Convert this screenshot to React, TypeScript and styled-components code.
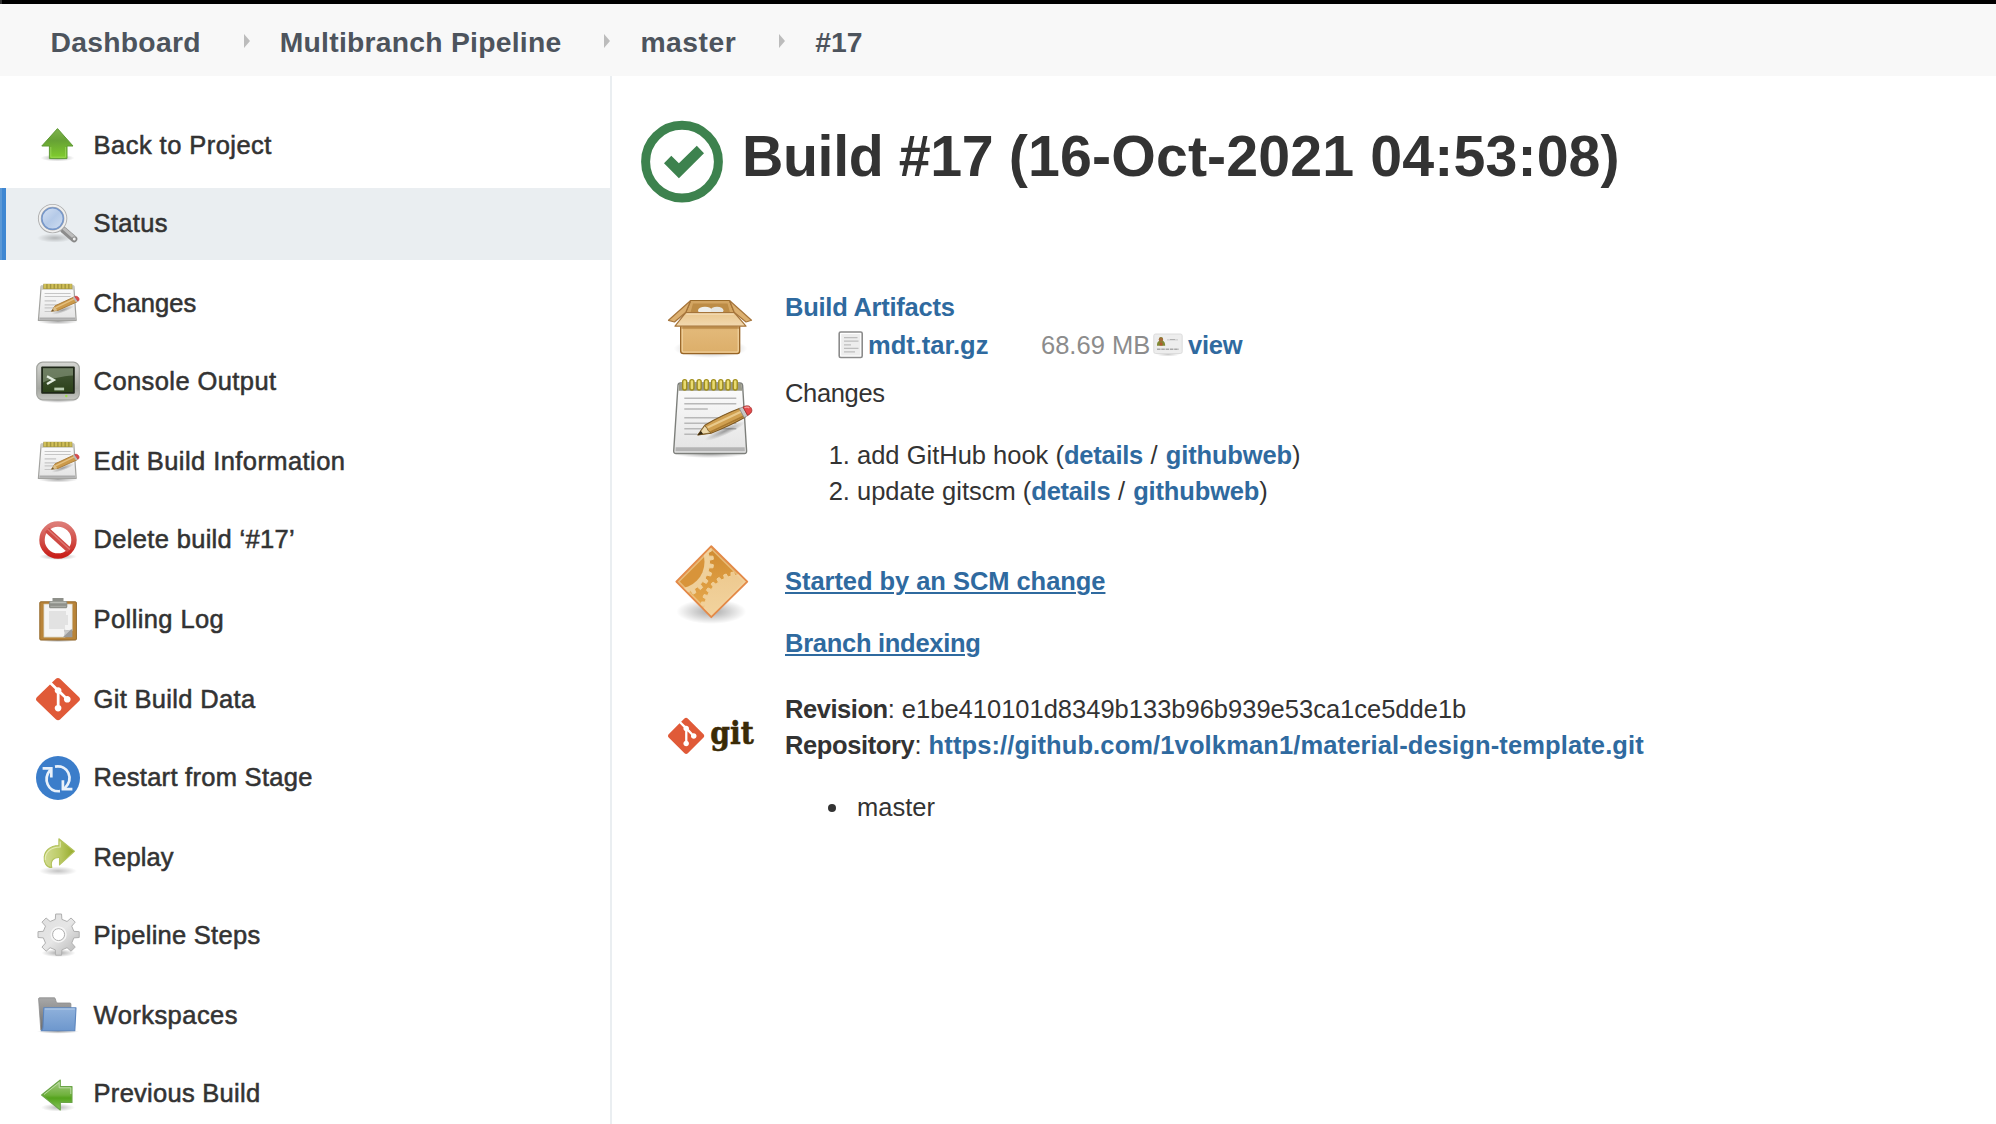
import React from "react";
import styled, { createGlobalStyle } from "styled-components";

const GlobalStyle = createGlobalStyle`
  * { box-sizing: border-box; }
  html, body { margin: 0; padding: 0; background: #fff; }
  body {
    font-family: "Liberation Sans", Arial, Helvetica, sans-serif;
    font-size: 25.5px;
    line-height: 36px;
    color: #333;
    overflow: hidden;
  }
  svg { display: block; flex: none; overflow: visible; }
`;

const Page = styled.div`
  display: flex;
  flex-direction: column;
  height: 1124px;
  overflow: hidden;
`;

const TopStrip = styled.div`
  flex: none;
  height: 4px;
  background: #000;
  border-left: 2px solid #333;
`;

const Breadcrumbs = styled.nav`
  flex: none;
  display: flex;
  align-items: center;
  height: 72px;
  padding: 3px 0 0 50.5px;
  background: #f8f8f8;
`;

const Crumb = styled.a<{ $track: number }>`
  font-size: 28.3px;
  font-weight: 700;
  color: #4d545d;
  white-space: nowrap;
  letter-spacing: ${(p) => p.$track}px;
`;

const Chevron = styled.span`
  width: 0;
  height: 0;
  margin: -1px 30px 0 43px;
  border: solid transparent;
  border-width: 7px 0 7px 6px;
  border-left-color: #bcbcbc;
`;

const Columns = styled.div`
  flex: 1;
  display: flex;
  min-height: 0;
`;

const Sidebar = styled.aside`
  flex: none;
  width: 612px;
  padding-top: 34px;
  border-right: 2px solid #eaeef1;
`;

const Task = styled.a<{ $active?: boolean; $track: number }>`
  display: flex;
  align-items: center;
  gap: 13.6px;
  height: 72px;
  margin-right: -2px;
  margin-bottom: 6px;
  padding-left: 36px;
  background: ${(p) => (p.$active ? "#eaeef1" : "transparent")};
  box-shadow: ${(p) => (p.$active ? "inset 2px 0 #5b98d6, inset 6px 0 #3f87d2" : "none")};
  letter-spacing: ${(p) => p.$track}px;

  &:nth-child(even) { margin-bottom: 8px; }
  &:nth-child(n + 7):nth-child(odd) { margin-bottom: 8px; }
  &:nth-child(n + 7):nth-child(even) { margin-bottom: 6px; }
`;

const TaskLabel = styled.span`
  padding-bottom: 2px;
  white-space: nowrap;
  -webkit-text-stroke: 0.55px #333;
`;

const Main = styled.main`
  flex: 1;
  padding: 45px 0 0 29px;
`;

const Heading = styled.header`
  display: flex;
  gap: 19px;
  height: 168px;
`;

const Title = styled.h1`
  margin: 5px 0 0;
  font-size: 57.3px;
  line-height: 60px;
  font-weight: 700;
  letter-spacing: 0.12px;
  white-space: nowrap;
`;

const BuildName = styled.span`
  letter-spacing: -0.38px;
`;

const Section = styled.section<{ $height: number }>`
  display: grid;
  grid-template-columns: 88px 1fr;
  column-gap: 30px;
  align-items: start;
  height: ${(p) => p.$height}px;
  padding-left: 26px;
`;

const IconCell = styled.div<{ $top: number }>`
  margin-top: ${(p) => p.$top}px;
`;

const Line = styled.div<{ $track?: number }>`
  white-space: nowrap;
  letter-spacing: ${(p) => p.$track ?? 0}px;
`;

const Label = styled.b<{ $track: number }>`
  letter-spacing: ${(p) => p.$track}px;
`;

const FileRow = styled.div`
  display: flex;
  align-items: center;
  margin-top: 2px;
  padding-left: 53px;
`;

const FileName = styled.a`
  margin-left: 4px;
  width: 173px;
  font-weight: 700;
  color: #2f6a9f;
`;

const FileSize = styled.span`
  width: 112px;
  color: #8c8c8c;
`;

const Link = styled.a<{ $underline?: boolean; $track?: number }>`
  font-weight: 700;
  color: #2f6a9f;
  letter-spacing: ${(p) => p.$track ?? 0}px;
  text-decoration: ${(p) => (p.$underline ? "underline" : "none")};
  text-decoration-thickness: 2px;
  text-underline-offset: 2px;
`;

const ViewLink = styled(Link)`
  margin-left: 5px;
`;

const Divider = styled.span`
  letter-spacing: 0.5px;
`;

const Paragraph = styled.p`
  margin: 0 0 26px;
  white-space: nowrap;
`;

const Ordered = styled.ol`
  margin: 26px 0 0;
  padding-left: 72px;
`;

const Item = styled.li`
  white-space: nowrap;
`;

const Bullets = styled.ul`
  margin: 26px 0 0;
  padding-left: 43px;
  list-style: none;
`;

const BulletItem = styled.li`
  display: flex;
  align-items: center;
  gap: 21px;

  &::before {
    content: "";
    width: 8px;
    height: 8px;
    margin-top: 2px;
    border-radius: 50%;
    background: #333;
  }
`;

const Small = ({ children }: { children: React.ReactNode }) => (
  <svg width="44" height="44" viewBox="0 0 44 44">{children}</svg>
);

const Gradients = () => (
  <svg width="0" height="0" style={{ position: "absolute" }}>
    <defs>
      <linearGradient id="green" x1="0" y1="0" x2="0" y2="1">
        <stop offset="0" stopColor="#7fb34d" />
        <stop offset=".4" stopColor="#67a235" />
        <stop offset="1" stopColor="#82cf2c" />
      </linearGradient>
      <linearGradient id="greenLeft" x1="0" y1="0" x2="0" y2="1">
        <stop offset="0" stopColor="#a9cc88" />
        <stop offset=".5" stopColor="#6fb13c" />
        <stop offset=".6" stopColor="#55a31d" />
        <stop offset="1" stopColor="#86c75c" />
      </linearGradient>
      <linearGradient id="olive" x1="0" y1="0" x2="1" y2="0">
        <stop offset="0" stopColor="#d3dc93" />
        <stop offset=".5" stopColor="#bccb66" />
        <stop offset="1" stopColor="#94a928" />
      </linearGradient>
      <radialGradient id="shadow">
        <stop offset="0" stopColor="#000" stopOpacity=".34" />
        <stop offset=".5" stopColor="#000" stopOpacity=".17" />
        <stop offset="1" stopColor="#000" stopOpacity="0" />
      </radialGradient>
      <linearGradient id="lens" x1="0" y1="0" x2="1" y2="1">
        <stop offset="0" stopColor="#dbe6f5" />
        <stop offset=".5" stopColor="#b5cae8" />
        <stop offset="1" stopColor="#d5e2f3" />
      </linearGradient>
      <linearGradient id="paper" x1="0" y1="0" x2="0" y2="1">
        <stop offset="0" stopColor="#fdfdfd" />
        <stop offset="1" stopColor="#e3e3e3" />
      </linearGradient>
      <linearGradient id="screen" x1="0" y1="0" x2="0" y2="1">
        <stop offset="0" stopColor="#46583a" />
        <stop offset="1" stopColor="#2b4119" />
      </linearGradient>
      <linearGradient id="bezel" x1="0" y1="0" x2="0" y2="1">
        <stop offset="0" stopColor="#d5d6d2" />
        <stop offset=".7" stopColor="#a5a7a1" />
        <stop offset="1" stopColor="#c4c6c1" />
      </linearGradient>
      <linearGradient id="red" x1="0" y1="0" x2="0" y2="1">
        <stop offset="0" stopColor="#dd7b76" />
        <stop offset=".6" stopColor="#cf4740" />
        <stop offset="1" stopColor="#c91f1a" />
      </linearGradient>
      <linearGradient id="steel" x1="0" y1="0" x2="1" y2="1">
        <stop offset="0" stopColor="#dedede" />
        <stop offset=".5" stopColor="#e6e6e6" />
        <stop offset="1" stopColor="#b4b4b4" />
      </linearGradient>
      <linearGradient id="folder" x1="0" y1="0" x2="0" y2="1">
        <stop offset="0" stopColor="#8fb1db" />
        <stop offset="1" stopColor="#6d97cd" />
      </linearGradient>
      <linearGradient id="folderBack" x1="0" y1="0" x2="0" y2="1">
        <stop offset="0" stopColor="#a8a8a8" />
        <stop offset="1" stopColor="#6c6c6c" />
      </linearGradient>
      <linearGradient id="carton" x1="0" y1="0" x2="0" y2="1">
        <stop offset="0" stopColor="#d3a45c" />
        <stop offset=".25" stopColor="#e2b878" />
        <stop offset="1" stopColor="#dcae69" />
      </linearGradient>
      <linearGradient id="flap" x1="0" y1="0" x2="0" y2="1">
        <stop offset="0" stopColor="#e9c68e" />
        <stop offset="1" stopColor="#f2d9b0" />
      </linearGradient>
      <linearGradient id="gearLight" x1="0" y1="0" x2="0" y2="1">
        <stop offset="0" stopColor="#edc98f" />
        <stop offset="1" stopColor="#f6dba9" />
      </linearGradient>
      <linearGradient id="gearDark" x1="0" y1="0" x2="0" y2="1">
        <stop offset="0" stopColor="#cf8a30" />
        <stop offset="1" stopColor="#e9ac4f" />
      </linearGradient>
    </defs>
  </svg>
);

const UpIcon = () => (
  <Small>
    <ellipse cx="21.5" cy="34" rx="17" ry="3.5" fill="url(#shadow)" />
    <path d="M21.5 4.6 37 22H31v12.6H13.4V22H5.8z" fill="url(#green)" stroke="#5e9a35" strokeWidth="1" strokeLinejoin="round" />
    <path d="M14.8 23v10.2h14.8V23" fill="none" stroke="#a4dd62" strokeWidth="1" opacity=".7" />
  </Small>
);

const SearchIcon = () => (
  <Small>
    <ellipse cx="19" cy="36" rx="18" ry="4.6" fill="url(#shadow)" opacity=".7" />
    <path d="M27.5 28 38 37" stroke="#8c8c8c" strokeWidth="6.6" strokeLinecap="round" />
    <path d="M28.4 27.2 38.6 36" stroke="#bdbdbd" strokeWidth="3" strokeLinecap="round" />
    <circle cx="38.2" cy="37" r="2" fill="#eee" stroke="#777" strokeWidth=".8" />
    <circle cx="16.6" cy="16.6" r="12.8" fill="url(#lens)" stroke="#adadad" strokeWidth="3.8" />
    <circle cx="16.6" cy="16.6" r="12.8" fill="none" stroke="#efefef" strokeWidth="2" />
    <circle cx="16.6" cy="16.6" r="10.7" fill="none" stroke="#7596ca" strokeWidth="1.4" />
  </Small>
);

const NotepadIcon = () => (
  <Small>
    <ellipse cx="22" cy="39.5" rx="20" ry="3" fill="url(#shadow)" />
    <path d="M5.2 4h32.6l2.4 34.4H2.4z" fill="url(#paper)" stroke="#a3a3a0" strokeWidth="1.2" strokeLinejoin="round" />
    <path d="M5 4h33l.3 3.8H4.7z" fill="#c9c8bc" />
    <path d="M3.4 36.6h36" stroke="#adadad" strokeWidth="2.4" />
    <path d="M7.3 4.4h29" stroke="#a39640" strokeWidth="5.2" />
    <path d="M8 4.2h28.4" stroke="#cfbe57" strokeWidth="4.6" strokeDasharray="2.2 1.45" />
    <path d="M8.6 11.5h26M8.6 14.5h26M8.6 18.8h11.5M8.6 22.8h22M8.6 25.8h18M8.6 29.5h10" stroke="#c6c6c6" strokeWidth="1.2" />
    <ellipse cx="27" cy="28" rx="12" ry="2.4" fill="url(#shadow)" transform="rotate(-20 27 28)" />
    <path d="M15.5 29.2l3.6-5.4L38 15l3.2 4.8L22 28.4z" fill="#cc9a4a" stroke="#a87a38" strokeWidth=".9" strokeLinejoin="round" />
    <path d="M19.5 25.8 38.6 16.7" stroke="#e5c07f" strokeWidth="1.4" />
    <path d="M15.5 29.2l3.2-4.8 2.6 4.2z" fill="#dcc08a" />
    <path d="M15.3 29.4l1.7-2.200.9 1.500z" fill="#5f4a2a" />
    <path d="M36.8 15.5l2.4-1.1 3.2 4.8-2.6 1.1z" fill="#b9b9b9" />
    <path d="M38.8 14.6c3-1.4 5.8 2.8 3.2 4.6z" fill="#e0484a" stroke="#c04040" strokeWidth=".8" />
  </Small>
);

const TerminalIcon = () => (
  <Small>
    <ellipse cx="22" cy="40" rx="20" ry="3" fill="url(#shadow)" />
    <rect x=".7" y="2.2" width="42.6" height="37.6" rx="6" fill="url(#bezel)" stroke="#a2a49f" strokeWidth="1.2" />
    <rect x="5.2" y="6.4" width="33.6" height="27.4" rx="1" fill="#1f2819" />
    <rect x="7" y="8.2" width="30" height="23.8" fill="url(#screen)" />
    <path d="M7 8.2h30v7.3C26 16.4 16 18 7 22.5z" fill="#8b9a7f" opacity=".6" />
    <path d="M11 16.2l6.8 3.8-6.8 4" fill="none" stroke="#e3ede0" strokeWidth="2.4" />
    <path d="M18.3 29h9.8" stroke="#b8cbb0" strokeWidth="2.8" />
    <circle cx="30.3" cy="36" r="1.2" fill="#9be04a" />
  </Small>
);

const DeleteIcon = () => (
  <Small>
    <ellipse cx="22" cy="38.6" rx="19" ry="3.4" fill="url(#shadow)" />
    <circle cx="22" cy="22" r="16" fill="#fff" fillOpacity=".8" stroke="url(#red)" strokeWidth="5.4" />
    <path d="M11 11.8 33.2 32.2" stroke="#cf4a44" strokeWidth="5.8" />
    <path d="M11.5 11 33.8 31.4" stroke="#dd7772" strokeWidth="1.4" />
  </Small>
);

const ClipboardIcon = () => (
  <Small>
    <ellipse cx="22" cy="42.4" rx="18" ry="1.8" fill="url(#shadow)" />
    <rect x="3.8" y="3.8" width="36.6" height="38.2" rx="1" fill="#b98439" stroke="#94682a" strokeWidth="1" />
    <path d="M7.8 6h28.6v26.5l-7.4 6.7H7.8z" fill="#f4f4f4" stroke="#c9b994" strokeWidth=".6" />
    <path d="M13 13h17v4h2v10h-3v4H13z" fill="#e2e2e2" />
    <path d="M36.4 31v8.2H27c2-1.5 2.4-4 1.2-7.4 3 .8 6 .6 8.2-.8z" fill="#9b9b9b" />
    <path d="M27 39.2c2-1.5 2.4-4 1.2-7.4 2 .5 4.5.6 6.5 0z" fill="#c9c9c9" />
    <path d="M16.5 0h11v3H30c1 0 1.300 1 1.300 2v3.400c0 1-.6 1.900-1.600 1.900H14.500c-1 0-1.500-.9-1.500-1.900V5c0-1 .3-2 1.300-2h2.200z" fill="#8e908a" />
    <path d="M14.2 4.5h16" stroke="#b9bbb5" strokeWidth="1.6" />
    <path d="M14.4 8.400h15.600" stroke="#a7a9a3" strokeWidth="1.2" />
  </Small>
);

const GIT_MARK =
  "M23.546 10.93L13.067.452c-.604-.603-1.582-.603-2.188 0L8.708 2.627l2.76 2.76c.645-.215 1.379-.07 1.889.441.516.515.658 1.258.438 1.9l2.658 2.66c.645-.223 1.387-.078 1.9.435.721.72.721 1.884 0 2.604-.719.719-1.881.719-2.6 0-.539-.541-.674-1.337-.404-1.996L12.86 8.955v6.525c.176.086.342.203.488.348.713.721.713 1.883 0 2.6-.719.721-1.889.721-2.609 0-.719-.719-.719-1.879 0-2.598.182-.18.387-.316.605-.406V8.835c-.217-.091-.424-.222-.6-.401-.545-.545-.676-1.342-.396-2.009L7.636 3.7.45 10.881c-.6.605-.6 1.584 0 2.189l10.48 10.477c.604.604 1.582.604 2.186 0l10.43-10.43c.605-.603.605-1.582 0-2.187";

const GitIcon = () => (
  <Small>
    <path transform="scale(1.8333 1.76)" d={GIT_MARK} fill="#e05a38" />
  </Small>
);

const RestartIcon = () => (
  <Small>
    <circle cx="22" cy="22" r="22" fill="#3b7dca" />
    <g fill="none" stroke="#e9f1fa" strokeWidth="2.7">
      <path d="M24 35.2C12 36 6.5 23.5 14.2 13.8" />
      <path d="M19 10.6C32 8.5 38.5 22.5 28.6 32.4" />
      <path d="M6.6 12.4h8.7V21.5" />
      <path d="M36.4 33.2h-9.5V24.3" />
    </g>
  </Small>
);

const ReplayIcon = () => (
  <Small>
    <ellipse cx="22" cy="35" rx="19" ry="4.6" fill="url(#shadow)" opacity=".7" />
    <path d="M22.9 2.8 38.4 15.3 23.5 28.8V21.5C17.5 21.2 14 25 15.8 31.5 5.5 32 3.5 10 22.9 9.5z" fill="url(#olive)" stroke="#b2c25c" strokeWidth="1.1" strokeLinejoin="round" />
    <path d="M24.2 5.5V11C14.5 11 8.8 16.5 9.3 24" fill="none" stroke="#e5ecb6" strokeWidth="1.1" />
  </Small>
);

const gearPath = (cx: number, cy: number, teeth: number, outer: number, inner: number) => {
  const step = (Math.PI * 2) / teeth;
  const points: string[] = [];
  for (let i = 0; i < teeth; i += 1) {
    const a = i * step - Math.PI / 2;
    const corners: [number, number][] = [
      [-0.27, inner],
      [-0.18, outer],
      [0.18, outer],
      [0.27, inner],
    ];
    corners.forEach(([offset, r]) => {
      const t = a + offset * step;
      points.push(`${(cx + r * Math.cos(t)).toFixed(2)} ${(cy + r * Math.sin(t)).toFixed(2)}`);
    });
  }
  return `M${points.join("L")}Z`;
};

const GearIcon = () => (
  <Small>
    <ellipse cx="22.5" cy="39" rx="17" ry="4" fill="url(#shadow)" />
    <path
      d={`${gearPath(22.6, 20.6, 8, 20.8, 15.6)}M16.6 20.6a6 6 0 1 0 12 0a6 6 0 1 0-12 0z`}
      fill="url(#steel)"
      fillRule="evenodd"
      stroke="#b0b0b0"
      strokeWidth="1"
      strokeLinejoin="round"
    />
    <circle cx="22.6" cy="20.6" r="7.4" fill="none" stroke="#f6f6f6" strokeWidth="1.4" />
  </Small>
);

const FolderIcon = () => (
  <Small>
    <ellipse cx="22" cy="37.5" rx="21" ry="2.2" fill="url(#shadow)" />
    <path d="M2.6 4.8c0-.6.4-1 1-1H18c1 0 1.3.6 1.7 2.4.4 1.8 1 2.8 2.2 2.8h12c.7 0 1 .4 1 1V36H4.800z" fill="url(#folderBack)" stroke="#8b8b8b" strokeWidth=".8" />
    <path d="M7.8 13.8H40l-1.2 23H5.2c1.6-.6 1.7-2 1.8-4z" fill="url(#folder)" stroke="#5c85bd" strokeWidth="1.1" strokeLinejoin="round" />
    <path d="M8.8 15h30" stroke="#b7cfeb" strokeWidth="1" />
  </Small>
);

const LeftIcon = () => (
  <Small>
    <ellipse cx="22" cy="35.5" rx="17" ry="4" fill="url(#shadow)" opacity=".8" />
    <path d="M5.6 23 24.3 8V14.6H36V30.4H24.3V38z" fill="url(#greenLeft)" stroke="#6ba548" strokeWidth="1.1" strokeLinejoin="round" />
    <path d="M8 22.5 23.2 10.5V15.8H34.8V22" fill="none" stroke="#c8e2b4" strokeWidth="1" opacity=".8" />
  </Small>
);

const SuccessIcon = () => (
  <svg width="82" height="82" viewBox="0 0 82 82">
    <circle cx="41" cy="40.7" r="36.4" fill="none" stroke="#3d824e" strokeWidth="9" />
    <path d="M23 42.3 30.3 34.7 37.9 42.3 55.8 24.7 63 32.3 37.9 57.3z" fill="#3d824e" />
  </svg>
);

const BoxIcon = () => (
  <svg width="88" height="88" viewBox="0 0 88 88">
    <ellipse cx="43.5" cy="63.5" rx="37" ry="9.5" fill="url(#shadow)" />
    <path d="M23.7 15.5H62.5L67.3 27.5 66 38H20L18.7 27.5z" fill="#d3a562" stroke="#9a6b2a" strokeWidth="1.2" strokeLinejoin="round" />
    <path d="M26 18.5h34.500l2.500 9h-39.500z" fill="#bd8c46" />
    <ellipse cx="38" cy="25.500" rx="7" ry="3.800" fill="#efefec" />
    <ellipse cx="50" cy="25.500" rx="6.500" ry="3.800" fill="#e6e6e2" />
    <path d="M13.7 38H72.7V66.3c0 1.5-.9 2.3-2.3 2.3H16.3c-1.700 0-2.600-.8-2.600-2.300z" fill="url(#carton)" stroke="#976425" strokeWidth="1.3" />
    <path d="M15.2 41v24.5c0 1 .5 1.500 1.500 1.500h53c1 0 1.500-.5 1.500-1.500V41" fill="none" stroke="#f1d4a3" strokeWidth="1.1" />
    <path d="M23.7 15.5 1.500 35.300 7.500 37 18.700 27.500z" fill="#dcb070" stroke="#a5743a" strokeWidth="1.2" strokeLinejoin="round" />
    <path d="M62.5 15.5 84.500 35.300 79 37 67.300 27.500z" fill="#dcb070" stroke="#a5743a" strokeWidth="1.2" strokeLinejoin="round" />
    <path d="M18.7 27.7H67.3L79 41.200H8z" fill="url(#flap)" stroke="#a5743a" strokeWidth="1.2" strokeLinejoin="round" />
    <path d="M19.3 29H66.8" stroke="#f8e6c6" strokeWidth="1" />
    <path d="M14.5 42.8H72" stroke="#a87534" strokeWidth="1.8" opacity=".6" />
  </svg>
);

const NotesIcon = () => (
  <svg width="88" height="88" viewBox="0 0 88 88">
    <ellipse cx="43" cy="79" rx="36" ry="4" fill="url(#shadow)" />
    <path d="M13.5 8H73c1.6 0 2.4.7 2.6 2.3L79.6 76c.1 1.6-.6 2.5-2.2 2.5H9c-1.6 0-2.4-.9-2.3-2.5L11 10.3C11.1 8.7 11.9 8 13.5 8z" fill="url(#paper)" stroke="#7d7f7b" strokeWidth="1.4" />
    <path d="M12 8.8H74.700l.4 7H11.600z" fill="#9a9a8a" />
    <path d="M8.7 72.2h69l.2 4H8.400z" fill="#b4b4b4" />
    {[0, 1, 2, 3, 4, 5, 6, 7].map((i) => (
      <rect key={i} x={15.7 + i * 7.22} y="4.6" width="4" height="10.4" rx="2" fill="#e9db72" stroke="#a08e1e" strokeWidth="1.4" />
    ))}
    <path d="M17.3 23.3h52M17.3 28.7h52M17.3 34h23.5M17.3 42.7h52M17.3 48.3h52M17.3 53.7h52M17.3 59.3h13" stroke="#b8b8b8" strokeWidth="1.4" />
    <ellipse cx="58" cy="56" rx="22" ry="4" fill="url(#shadow)" transform="rotate(-24 58 56)" />
    <path d="M30.8 60 37.8 50.2C52 42 63 37 73 33.3l5 9C67 48.5 56 53.5 44 58.3z" fill="#d0a051" stroke="#7d5822" strokeWidth="1.1" strokeLinejoin="round" />
    <path d="M40.5 52.5 74.5 36.5" stroke="#e9c98b" strokeWidth="2" />
    <path d="M43.5 57 77 41" stroke="#a97a31" strokeWidth="1.6" />
    <path d="M31 59.8l6.8-9.200 2.400 3 .9 2 3 2.200z" fill="#ecd9ac" stroke="#7a5a24" strokeWidth=".8" />
    <path d="M30.6 60.2l3.200-4.400 2.300 3.200z" fill="#33260f" />
    <path d="M72.3 33.6 76 32l4.800 8.600-3.600 1.900z" fill="#c7c7c7" stroke="#8a8a8a" strokeWidth=".8" />
    <path d="M76 32c4.5-2 7-1.2 8.300 1.400 1.400 3-.2 5-3.700 7z" fill="#e6494b" stroke="#a53532" strokeWidth="1" />
    <path d="M77.5 32.8c2-1 3.600-.9 4.800.3" stroke="#f4a09f" strokeWidth="1.2" fill="none" />
  </svg>
);

const ScmIcon = () => (
  <svg width="88" height="88" viewBox="0 0 88 88">
    <clipPath id="diamond">
      <path d="M44.3 6 79.6 40.7 44.3 75.3 10 40.7z" />
    </clipPath>
    <ellipse cx="44.3" cy="70.5" rx="35" ry="12.5" fill="url(#shadow)" />
    <path d="M44.3 5 80.6 40.7 44.3 76.5 9 40.7z" fill="url(#gearDark)" />
    <g clipPath="url(#diamond)">
      <path d={gearPath(11, 21, 26, 35.5, 31.5)} fill="#efd09b" stroke="#efd09b" strokeWidth="1" strokeLinejoin="round" />
      <circle cx="11" cy="21" r="26.5" fill="#d8943a" />
      <path d={gearPath(73, 70, 32, 39.5, 36)} fill="url(#gearLight)" stroke="#f0cf97" strokeWidth="1" strokeLinejoin="round" />
    </g>
    <path d="M44.3 7.600 77.800 40.700 44.300 73.800 11.600 40.700z" fill="none" stroke="#f3d3a0" strokeWidth="1.8" opacity=".6" />
    <path d="M44.3 5.2 80.3 40.700 44.300 76.200 9.300 40.700z" fill="none" stroke="#e48a49" strokeWidth="1.8" strokeLinejoin="round" />
  </svg>
);

const GitLogo = () => (
  <svg width="88" height="48" viewBox="0 0 88 48">
    <path transform="translate(1 5.7) scale(1.51)" d={GIT_MARK} fill="#e05a38" />
    <text
      x="43.2"
      y="32"
      textLength="43.5"
      lengthAdjust="spacingAndGlyphs"
      fontFamily="DejaVu Serif, serif"
      fontWeight="700"
      fontSize="32"
      fill="#3a2a06"
      stroke="#3a2a06"
      strokeWidth=".6"
    >
      git
    </text>
  </svg>
);

const FileIcon = () => (
  <svg width="26" height="28" viewBox="0 0 26 28">
    <rect x="1.2" y="1" width="23" height="25.5" rx="1.5" fill="#fff" stroke="#8b8b8b" strokeWidth="1.6" />
    <rect x="3.2" y="3" width="19" height="21.5" fill="#ededed" />
    <path d="M6 6.7h13.5M6 10.2h14.5M6 13.9h7M6 17.4h14.5M6 20.9h11" stroke="#bdbdbd" strokeWidth="1.3" />
  </svg>
);

const CardIcon = () => (
  <svg width="30" height="24" viewBox="0 0 30 24">
    <ellipse cx="15" cy="21.5" rx="12" ry="2" fill="url(#shadow)" opacity=".6" />
    <rect x=".8" y="1" width="28.4" height="19.5" rx="1.8" fill="#ededed" stroke="#dcdcdc" strokeWidth="1" />
    <path d="M4 12.8c0-4 1.500-4.500 2.500-5C5.500 5 6.500 4 8 4s2.500 1 1.600 3.500c1 .5 2.600 1.500 2.600 5.300z" fill="#7f8a35" />
    <circle cx="7.9" cy="6.6" r="2.2" fill="#a26c39" />
    <path d="M7 9.5h2.2l.5 3H6.5z" fill="#b4572f" />
    <path d="M14 6.8h11" stroke="#d6d6d6" strokeWidth="1.6" />
    <path d="M17 6.5h5" stroke="#b0b0b0" strokeWidth="1" />
    <path d="M4 16.2h22" stroke="#a8a8a8" strokeWidth="1.4" strokeDasharray="3.5 .8" />
  </svg>
);

const tasks = [
  { label: "Back to Project", Icon: UpIcon, track: 0.45 },
  { label: "Status", Icon: SearchIcon, track: 0.32, active: true },
  { label: "Changes", Icon: NotepadIcon, track: 0.1 },
  { label: "Console Output", Icon: TerminalIcon, track: 0.41 },
  { label: "Edit Build Information", Icon: NotepadIcon, track: 0.43 },
  { label: "Delete build ‘#17’", Icon: DeleteIcon, track: 0.32 },
  { label: "Polling Log", Icon: ClipboardIcon, track: 0.4 },
  { label: "Git Build Data", Icon: GitIcon, track: 0.32 },
  { label: "Restart from Stage", Icon: RestartIcon, track: 0.28 },
  { label: "Replay", Icon: ReplayIcon, track: 0.1 },
  { label: "Pipeline Steps", Icon: GearIcon, track: 0.27 },
  { label: "Workspaces", Icon: FolderIcon, track: 0.45 },
  { label: "Previous Build", Icon: LeftIcon, track: 0.27 },
];

const crumbs = [
  { label: "Dashboard", track: 0.27 },
  { label: "Multibranch Pipeline", track: 0.25 },
  { label: "master", track: 0.5 },
  { label: "#17", track: 0 },
];

const changes = ["add GitHub hook", "update gitscm"];

export default function App() {
  return (
    <Page>
      <GlobalStyle />
      <Gradients />
      <TopStrip />
      <Breadcrumbs>
        {crumbs.map((crumb, i) => (
          <React.Fragment key={crumb.label}>
            {i > 0 && <Chevron />}
            <Crumb $track={crumb.track}>{crumb.label}</Crumb>
          </React.Fragment>
        ))}
      </Breadcrumbs>
      <Columns>
        <Sidebar>
          {tasks.map(({ label, Icon, track, active }) => (
            <Task key={label} $active={active} $track={track}>
              <Icon />
              <TaskLabel>{label}</TaskLabel>
            </Task>
          ))}
        </Sidebar>
        <Main>
          <Heading>
            <SuccessIcon />
            <Title><BuildName>Build #17 </BuildName>(16-Oct-2021 04:53:08)</Title>
          </Heading>
          <Section $height={86}>
            <IconCell $top={-4}><BoxIcon /></IconCell>
            <div>
              <Line><Link $track={-0.25}>Build Artifacts</Link></Line>
              <FileRow>
                <FileIcon />
                <FileName>mdt.tar.gz</FileName>
                <FileSize>68.69 MB</FileSize>
                <CardIcon />
                <ViewLink $track={-0.25}>view</ViewLink>
              </FileRow>
            </div>
          </Section>
          <Section $height={188}>
            <IconCell $top={0}><NotesIcon /></IconCell>
            <div>
              <Line $track={-0.35}>Changes</Line>
              <Ordered>
                {changes.map((change) => (
                  <Item key={change}>
                    {change} (<Link $track={-0.25}>details</Link>
                    <Divider> / </Divider>
                    <Link $track={-0.15}>githubweb</Link>)
                  </Item>
                ))}
              </Ordered>
            </div>
          </Section>
          <Section $height={128}>
            <IconCell $top={-22}><ScmIcon /></IconCell>
            <div>
              <Paragraph><Link $underline $track={-0.05}>Started by an SCM change</Link></Paragraph>
              <Paragraph><Link $underline $track={-0.28}>Branch indexing</Link></Paragraph>
            </div>
          </Section>
          <Section $height={140}>
            <IconCell $top={21}><GitLogo /></IconCell>
            <div>
              <Line><Label $track={-0.45}>Revision</Label>: e1be410101d8349b133b96b939e53ca1ce5dde1b</Line>
              <Line>
                <Label $track={-0.38}>Repository</Label>:{" "}
                <Link $track={0.12}>https://github.com/1volkman1/material-design-template.git</Link>
              </Line>
              <Bullets>
                <BulletItem>master</BulletItem>
              </Bullets>
            </div>
          </Section>
        </Main>
      </Columns>
    </Page>
  );
}
